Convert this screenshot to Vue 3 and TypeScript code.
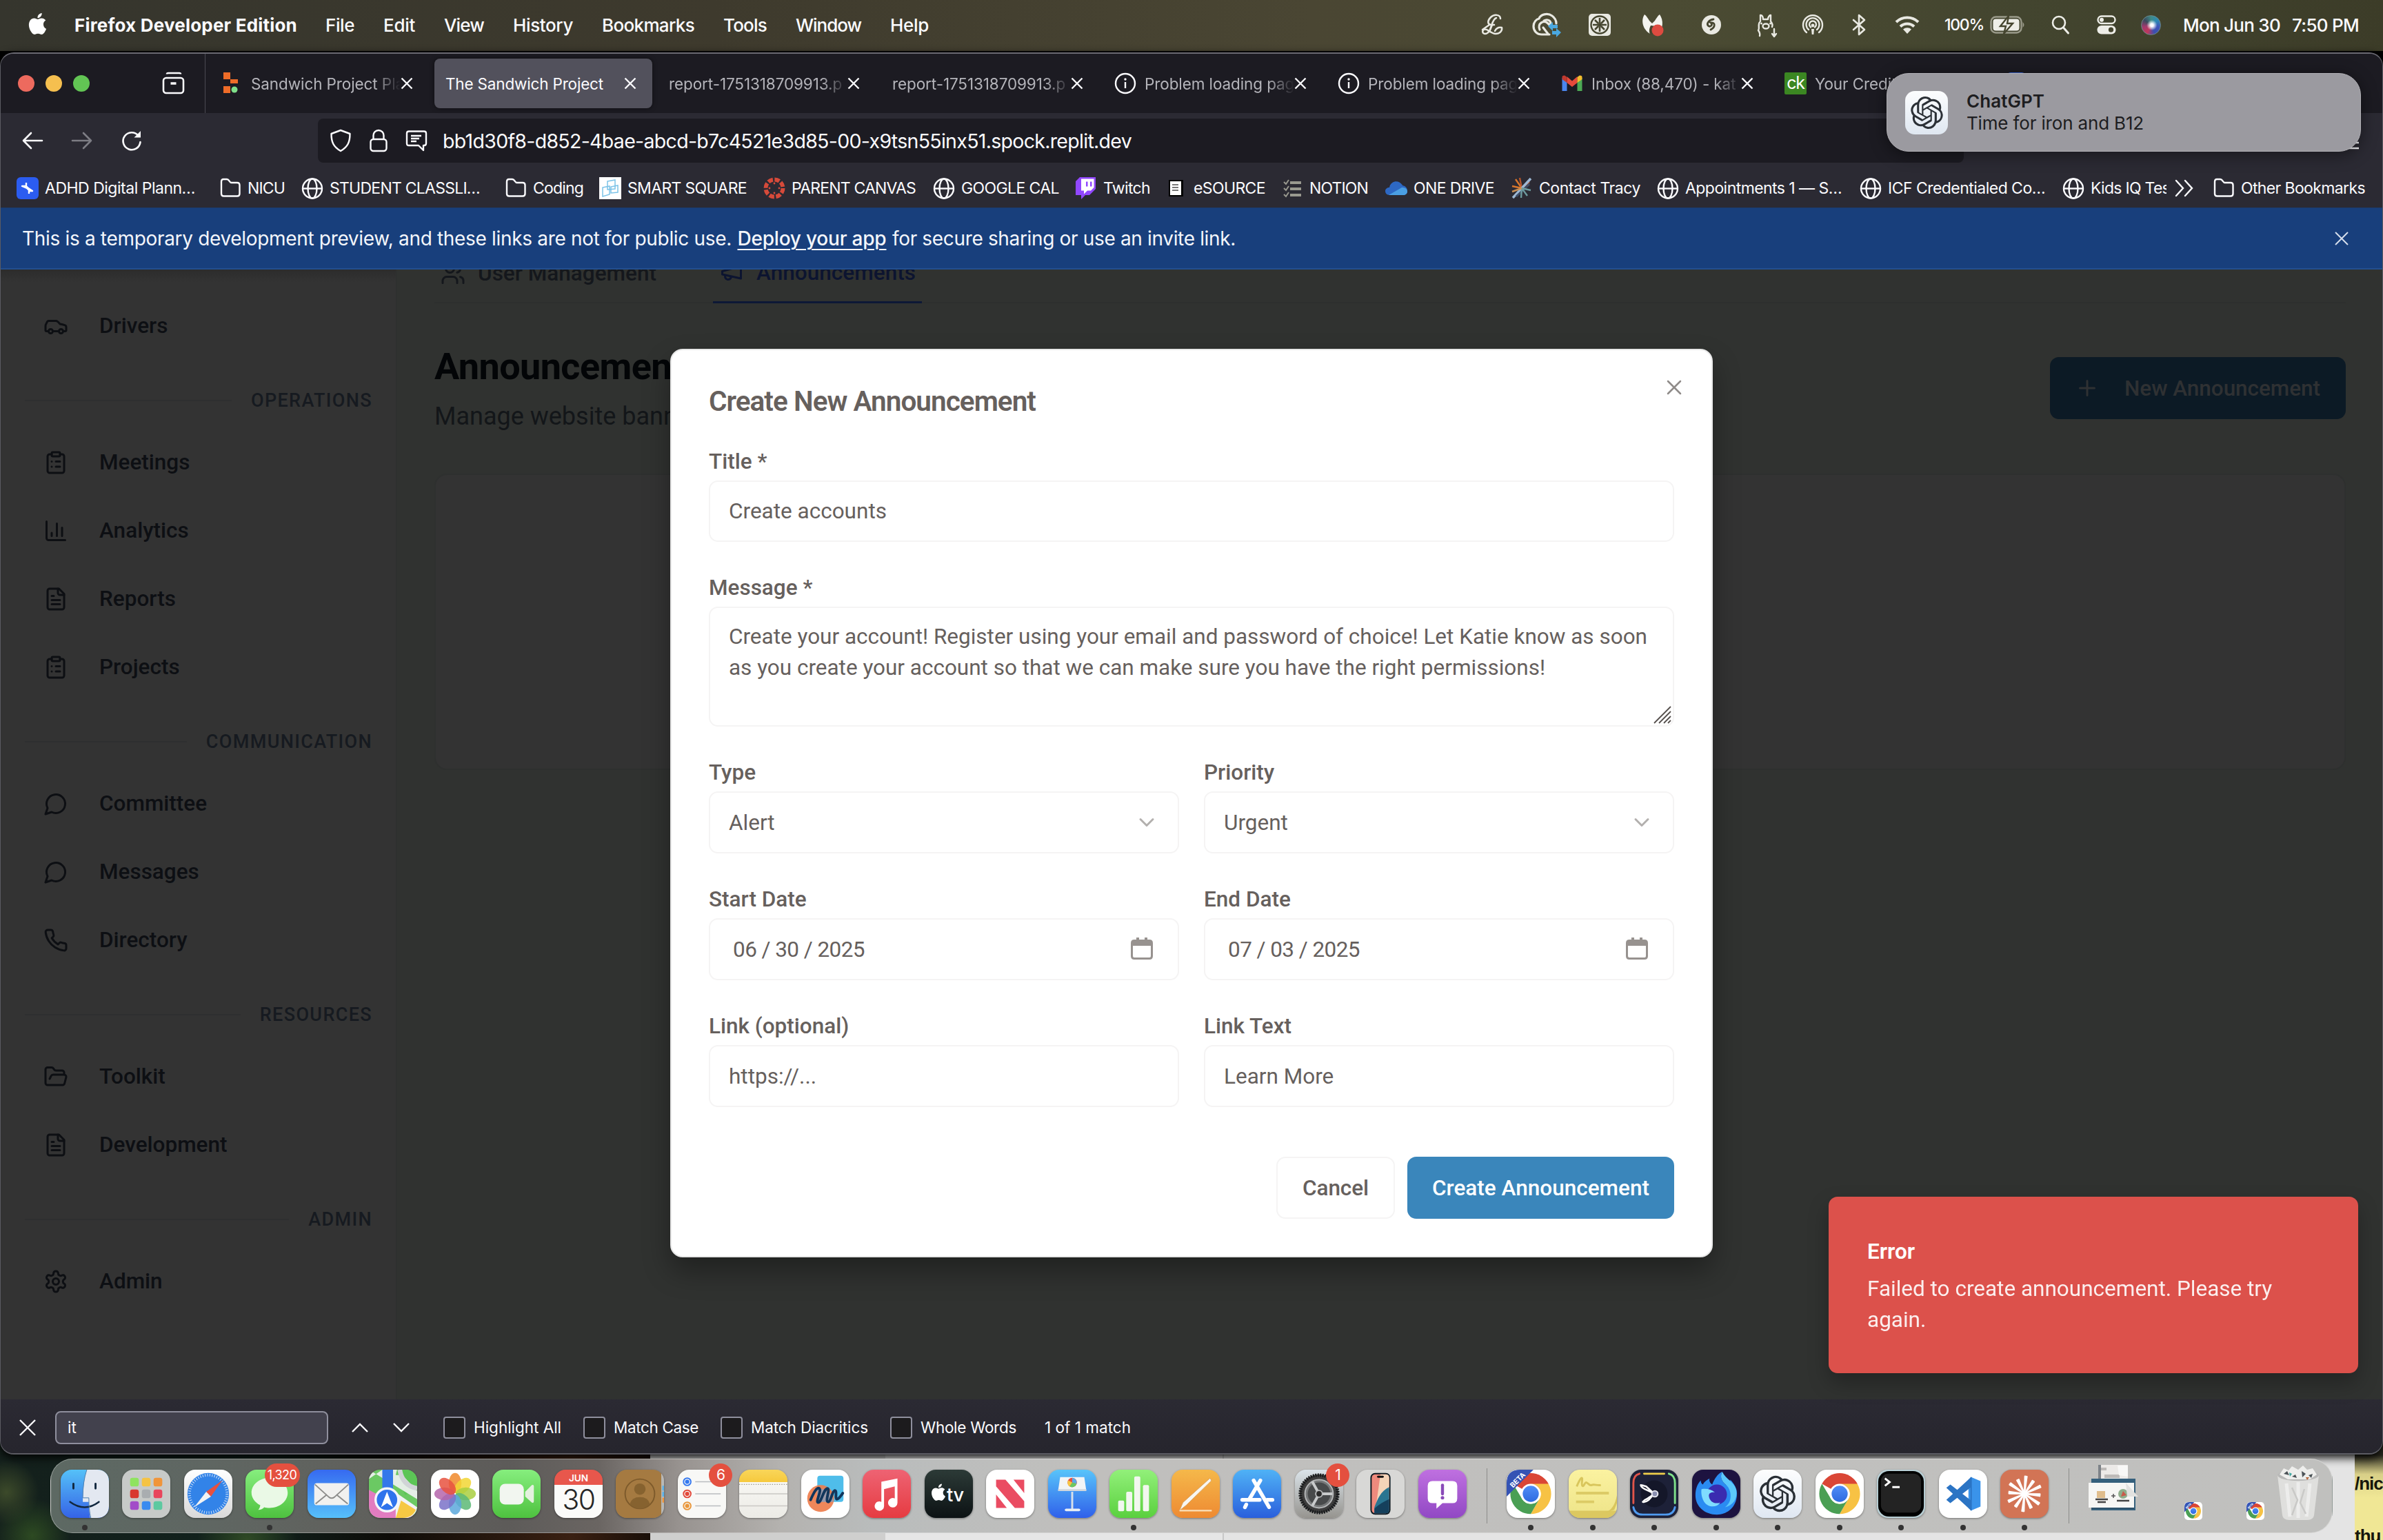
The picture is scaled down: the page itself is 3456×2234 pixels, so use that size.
<script setup lang="ts">
import type { Directive } from 'vue'

/** Spreads a label's letters so that it fills the width (in px) it is given. */
const vFit: Directive<HTMLElement, number> = {
  mounted(el, { value }) {
    const natural = el.getBoundingClientRect().width
    const count = (el.textContent ?? '').trim().length
    if (count > 0) el.style.letterSpacing = `${((value - natural) / count).toFixed(3)}px`
  },
}

interface Fitted { text: string; w: number }

const menus: Fitted[] = [
  { text: 'File', w: 42 }, { text: 'Edit', w: 46 }, { text: 'View', w: 58 },
  { text: 'History', w: 87 }, { text: 'Bookmarks', w: 134 }, { text: 'Tools', w: 63 },
  { text: 'Window', w: 95 }, { text: 'Help', w: 56 },
]

const applePath = 'M12.152 6.896c-.948 0-2.415-1.078-3.96-1.04-2.04.027-3.91 1.183-4.961 3.014-2.117 3.675-.546 9.103 1.519 12.09 1.013 1.454 2.208 3.09 3.792 3.039 1.52-.065 2.09-.987 3.935-.987 1.831 0 2.35.987 3.96.948 1.637-.026 2.676-1.48 3.676-2.948 1.156-1.688 1.636-3.325 1.662-3.415-.039-.013-3.182-1.221-3.22-4.857-.026-3.04 2.48-4.494 2.597-4.559-1.429-2.09-3.623-2.324-4.39-2.376-2-.156-3.675 1.09-4.61 1.09zM15.53 3.83c.843-1.012 1.4-2.427 1.245-3.83-1.207.052-2.662.805-3.532 1.818-.78.896-1.454 2.338-1.273 3.714 1.338.104 2.715-.688 3.559-1.701'
const knotPath = 'M22.2819 9.8211a5.9847 5.9847 0 0 0-.5157-4.9108 6.0462 6.0462 0 0 0-6.5098-2.9A6.0651 6.0651 0 0 0 4.9807 4.1818a5.9847 5.9847 0 0 0-3.9977 2.9 6.0462 6.0462 0 0 0 .7427 7.0966 5.98 5.98 0 0 0 .511 4.9107 6.051 6.051 0 0 0 6.5146 2.9001A5.9847 5.9847 0 0 0 13.2599 24a6.0557 6.0557 0 0 0 5.7718-4.2058 5.9894 5.9894 0 0 0 3.9977-2.9001 6.0557 6.0557 0 0 0-.7475-7.0729zm-9.022 12.6081a4.4755 4.4755 0 0 1-2.8764-1.0408l.1419-.0804 4.7783-2.7582a.7948.7948 0 0 0 .3927-.6813v-6.7369l2.02 1.1686a.071.071 0 0 1 .038.052v5.5826a4.504 4.504 0 0 1-4.4945 4.4944zm-9.6607-4.1254a4.4708 4.4708 0 0 1-.5346-3.0137l.142.0852 4.783 2.7582a.7712.7712 0 0 0 .7806 0l5.8428-3.3685v2.3324a.0804.0804 0 0 1-.0332.0615L9.74 19.9502a4.4992 4.4992 0 0 1-6.1408-1.6464zM2.3408 7.8956a4.485 4.485 0 0 1 2.3655-1.9728V11.6a.7664.7664 0 0 0 .3879.6765l5.8144 3.3543-2.0201 1.1685a.0757.0757 0 0 1-.071 0l-4.8303-2.7865A4.504 4.504 0 0 1 2.3408 7.872zm16.5963 3.8558L13.1038 8.364 15.1192 7.2a.0757.0757 0 0 1 .071 0l4.8303 2.7913a4.4944 4.4944 0 0 1-.6765 8.1042v-5.6772a.79.79 0 0 0-.407-.667zm2.0107-3.0231l-.142-.0852-4.7735-2.7818a.7759.7759 0 0 0-.7854 0L9.409 9.2297V6.8974a.0662.0662 0 0 1 .0284-.0615l4.8303-2.7866a4.4992 4.4992 0 0 1 6.6802 4.66zM8.3065 12.863l-2.02-1.1638a.0804.0804 0 0 1-.038-.0567V6.0742a4.4992 4.4992 0 0 1 7.3757-3.4537l-.142.0805L8.704 5.459a.7948.7948 0 0 0-.3927.6813zm1.0976-2.3654l2.602-1.4998 2.6069 1.4998v2.9994l-2.5974 1.4997-2.6067-1.4997Z'

/** Status icons; `gap` is the free space to the left of each one. */
interface StatusIcon { gap: number; art: string }
const statusIcons: StatusIcon[] = [
  { gap: 0, art: '<g fill="none" stroke="#e9e9e2" stroke-width="2.500" stroke-linecap="round" stroke-linejoin="round"><path d="M30 9C30 3 21 2 16 7c-5 5-5 10 0 11h5"/><path d="M24 8c-5 2-6 9-8 14-1 4-4 9-8 9s-5-4-2-6c5-3 9 6 17 6 6 0 10-4 9-9-5-1-8 1-10 5"/><path d="M14 18L4 25M18 18l-4 10"/></g>' },
  { gap: 41, art: '<g fill="none" stroke="#e9e9e2" stroke-width="3.200" stroke-linecap="round"><path d="M13 32C6 32 1 27 1 20 1 14 5 10 9 9c2-6 12-9 19-4 4 3 6 7 6 11M24 32H13"/><path d="M10 25c-4-9 6-15 12-9l3 3M16 12c5-3 10 0 10 4M15 22l7 9"/></g><path d="M22 20l7-6v4h7v5h-7v4z" fill="#4aa8e0"/><path d="M41 29l-7-6v4h-6v5h6v4z" fill="#4aa8e0"/>' },
  { gap: 43, art: '<rect x="2" y="2" width="32" height="32" rx="5" fill="#e9e9e2"/><circle cx="18" cy="18" r="12.500" fill="none" stroke="#45452f" stroke-width="2.400"/><g stroke="#45452f" stroke-width="2.600"><path d="M18 8v7M18 21v7M8 18h7M21 18h7M11 11l5 5M20 20l5 5M25 11l-5 5M16 20l-5 5"/></g><circle cx="18" cy="18" r="3" fill="#45452f"/>' },
  { gap: 40, art: '<path d="M7 3c3 2 5 6 7 9l4 4 4-4c2-3 4-7 7-9 6 9 5 20-2 28H15C5 25 1 12 7 3z" fill="#f4f4ef"/><path d="M16 19c-2 4-3 8-1 13h6l3-12z" fill="#45452f"/><circle cx="26" cy="26" r="8.500" fill="#dd4b40"/>' },
  { gap: 50, art: '<circle cx="18" cy="18" r="14" fill="#e9e9e2"/><path d="M21 10c-7 1-10 6-8 9 3 3 8-1 4-4 7-1 7 6 0 10" fill="none" stroke="#45452f" stroke-width="2.800" stroke-linecap="round"/>' },
  { gap: 44, art: '<g fill="none" stroke="#e9e9e2" stroke-width="2.400" stroke-linecap="round" stroke-linejoin="round"><path d="M8 34c1-3 0-5-2-8 2-3 0-6 1-9 0-2 2-4 2-4V4c3 0 4 3 4 6h7c0-3 2-6 4-6v9c2 2 3 5 2 8"/><ellipse cx="17" cy="20" rx="4.500" ry="3.500"/><path d="M29 24v10M26 31l3 4 3-4"/></g><circle cx="10.500" cy="16" r="1.500" fill="#e9e9e2"/><circle cx="23.500" cy="16" r="1.500" fill="#e9e9e2"/>' },
  { gap: 31, art: '<g fill="none" stroke="#e9e9e2" stroke-width="2.400" stroke-linecap="round"><path d="M9 29a14 14 0 1 1 18 0"/><path d="M12 25a9.500 9.500 0 1 1 12 0"/><path d="M15 21.500a5 5 0 1 1 6 0"/></g><circle cx="18" cy="19" r="2.400" fill="#e9e9e2"/><path d="M16 24h4l-.7 8h-2.600z" fill="#e9e9e2"/>' },
  { gap: 31, art: '<path d="M10 11l16 14-8 7V4l8 7-16 14" fill="none" stroke="#e9e9e2" stroke-width="2.600" stroke-linejoin="round" stroke-linecap="round"/>' },
  { gap: 34, art: '<g fill="none" stroke="#e9e9e2" stroke-width="4"><path d="M2 14a23 23 0 0 1 32 0"/><path d="M8 20.500a14.500 14.500 0 0 1 20 0"/></g><path d="M18 31l-6-6.500a9 9 0 0 1 12 0z" fill="#e9e9e2"/>' },
]

const tabs = [
  { title: 'Sandwich Project Pla', icon: 'replit', fit: 0, active: false },
  { title: 'The Sandwich Project', icon: '', fit: 227, active: true },
  { title: 'report-1751318709913.p', icon: '', fit: 0, active: false },
  { title: 'report-1751318709913.p', icon: '', fit: 0, active: false },
  { title: 'Problem loading pag', icon: 'info', fit: 0, active: false },
  { title: 'Problem loading pag', icon: 'info', fit: 0, active: false },
  { title: 'Inbox (88,470) - kat', icon: 'gmail', fit: 0, active: false },
  { title: 'Your Credit', icon: 'ck', fit: 0, active: false },
]
const tabIcons: Record<string, string> = {
  replit: '<path d="M4 0h10v10H4zM14 10h11v6H14zM4 20h10v10H4z" fill="#ee6c28" /><circle cx="20" cy="25" r="4.500" fill="#7fe08a"/>',
  info: '<circle cx="16" cy="16" r="14" fill="none" stroke="#fbfbfe" stroke-width="2.400"/><path d="M16 14v9" stroke="#fbfbfe" stroke-width="2.400"/><circle cx="16" cy="10" r="1.700" fill="#fbfbfe"/>',
  gmail: '<path d="M1.500 27V8l7 5v14z" fill="#4a86ee"/><path d="M23.500 27h7V8l-7 5z" fill="#4caa54"/><path d="M8.500 6v9l7.500 6 7.500-6V6L16 12.500z" fill="#e64a3b"/><path d="M1.500 10V7c0-2.500 3-3 4.500-2l2.500 2v8z" fill="#c0392f"/><path d="M30.500 10V7c0-2.500-3-3-4.500-2l-2.500 2v8z" fill="#f4bd2e"/>',
}

interface Bookmark extends Fitted { icon: string; slot: number; clip?: boolean }
const bookmarks: Bookmark[] = [
  { text: 'ADHD Digital Plann…', w: 218, icon: 'adhd', slot: 294 },
  { text: 'NICU', w: 54, icon: 'folder', slot: 119 },
  { text: 'STUDENT CLASSLI…', w: 218, icon: 'globe', slot: 295 },
  { text: 'Coding', w: 73, icon: 'folder', slot: 137 },
  { text: 'SMART SQUARE', w: 173, icon: 'smart', slot: 238 },
  { text: 'PARENT CANVAS', w: 180, icon: 'canvas', slot: 246 },
  { text: 'GOOGLE CAL', w: 142, icon: 'globe', slot: 206 },
  { text: 'Twitch', w: 68, icon: 'twitch', slot: 131 },
  { text: 'eSOURCE', w: 104, icon: 'sheet', slot: 168 },
  { text: 'NOTION', w: 85, icon: 'list', slot: 151 },
  { text: 'ONE DRIVE', w: 117, icon: 'cloud', slot: 182 },
  { text: 'Contact Tracy', w: 147, icon: 'burst', slot: 212 },
  { text: 'Appointments 1 — S…', w: 227, icon: 'globe', slot: 294 },
  { text: 'ICF Credentialed Co…', w: 228, icon: 'globe', slot: 294 },
  { text: 'Kids IQ Tes', w: 115, icon: 'globe', slot: 151, clip: true },
]
const bookmarkIcons: Record<string, string> = {
  adhd: '<rect width="32" height="32" rx="6" fill="#2b5cf0"/><path d="M14 8v5l3 3 6 4h-5M18 24v-5l-3-3-7-3h5" fill="none" stroke="#fff" stroke-width="2.400" stroke-linejoin="round"/>',
  folder: '<path d="M3 6.500C3 4.500 4 3 6 3h5c2 0 2.500 1 3.500 2.500S16 8 18 8h8c2 0 3.500 1 3.500 3.500V24c0 2-1.500 3.500-3.500 3.500H6.500C4 27.500 3 26 3 24z" fill="none" stroke="#fbfbfe" stroke-width="2.400"/>',
  globe: '<g fill="none" stroke="#fbfbfe" stroke-width="2.400"><circle cx="16" cy="16.500" r="14"/><ellipse cx="16" cy="16.500" rx="6.500" ry="14"/><path d="M2 16.500h28"/></g>',
  smart: '<rect width="32" height="32" fill="#fff"/><g fill="none" stroke="#7cc3e8" stroke-width="1.500"><path d="M12 6l11-2v13l-11 1zM5 15l10-2v12l-10 3zM17 14l10-2v10l-10 1z"/></g>',
  canvas: '<circle cx="16" cy="16" r="12.500" fill="none" stroke="#d64a3a" stroke-width="6" stroke-dasharray="7.300 2.520"/><g fill="#d64a3a"><circle cx="16" cy="9" r="1.400"/><circle cx="16" cy="23" r="1.400"/><circle cx="9" cy="16" r="1.400"/><circle cx="23" cy="16" r="1.400"/></g>',
  twitch: '<path d="M7 0L1 6v20h8v6l6-6h6l9-9V0z" fill="#9147ff"/><path d="M9 2.500h18.500V15l-4.500 4.500h-5l-5 5v-5H9z" fill="#fff"/><path d="M16 6.500h2.500v7H16zM22 6.500h2.500v7H22z" fill="#9147ff"/>',
  sheet: '<rect x="5" y="4" width="21" height="24" fill="#000"/><rect x="7" y="6" width="16" height="20" fill="#fff"/><path d="M10 11h9M10 15h9M10 19h9" stroke="#777" stroke-width="2"/>',
  list: '<g stroke="#99998f" stroke-width="4.200" fill="none"><path d="M13 8h16M13 17h16M13 26h16"/><path d="M4 7l3 3 4-6M4 16l3 3 4-6M4 25l3 3 4-6" stroke-width="2"/></g>',
  cloud: '<path d="M6 15a10 10 0 0 1 19-3c5 1 7 4 7 8 0 4-3 6-6 6H7C2 26 0 23 0 20c0-3 3-5 6-5z" fill="#2d68c4"/><path d="M5 26l19-11c5 0 8 2 8 6 0 3-3 5-6 5z" fill="#4a9fe3"/>',
  burst: '<g stroke-width="2.400"><path d="M16 16L7 3M16 16L2 13" stroke="#d8762c"/><path d="M16 16L13 1M16 16l11-9" stroke="#b4532a"/><path d="M3 30L29 2" stroke="#9db8d4" stroke-width="3.500"/><path d="M8 28L27 10" stroke="#3f4d66" stroke-width="3"/><path d="M16 16l13 3M16 16l8 11M16 16l-1 14" stroke="#6d9a9e"/><path d="M16 16L2 21" stroke="#c78f55"/></g>',
}

interface NavRow { label: string; icon?: string }
const navRows: NavRow[] = [
  { label: 'Drivers', icon: 'car' },
  { label: 'OPERATIONS' },
  { label: 'Meetings', icon: 'clipboard' },
  { label: 'Analytics', icon: 'chart' },
  { label: 'Reports', icon: 'file' },
  { label: 'Projects', icon: 'clipboard' },
  { label: 'COMMUNICATION' },
  { label: 'Committee', icon: 'message' },
  { label: 'Messages', icon: 'message' },
  { label: 'Directory', icon: 'phone' },
  { label: 'RESOURCES' },
  { label: 'Toolkit', icon: 'folder' },
  { label: 'Development', icon: 'file' },
  { label: 'ADMIN' },
  { label: 'Admin', icon: 'gear' },
]
const lineIcons: Record<string, string> = {
  car: '<path d="M19 17h2c.6 0 1-.4 1-1v-3c0-.9-.7-1.700-1.500-1.900C18.700 10.600 16 10 16 10s-1.300-1.400-2.200-2.300c-.5-.4-1.100-.7-1.800-.7H5c-.6 0-1.100.4-1.400.9l-1.400 2.900A3.700 3.700 0 0 0 2 12v4c0 .6.4 1 1 1h2"/><circle cx="7" cy="17" r="2"/><path d="M9 17h6"/><circle cx="17" cy="17" r="2"/>',
  clipboard: '<rect width="8" height="4" x="8" y="2" rx="1"/><path d="M16 4h2a2 2 0 0 1 2 2v14a2 2 0 0 1-2 2H6a2 2 0 0 1-2-2V6a2 2 0 0 1 2-2h2M12 11h4M12 16h4M8 11h.01M8 16h.01"/>',
  chart: '<path d="M3 3v16a2 2 0 0 0 2 2h16M18 17V9M13 17V5M8 17v-3"/>',
  file: '<path d="M15 2H6a2 2 0 0 0-2 2v16a2 2 0 0 0 2 2h12a2 2 0 0 0 2-2V7Z"/><path d="M14 2v4a2 2 0 0 0 2 2h4M10 9H8M16 13H8M16 17H8"/>',
  message: '<path d="M7.900 20A9 9 0 1 0 4 16.100L2 22Z"/>',
  phone: '<path d="M22 16.920v3a2 2 0 0 1-2.180 2 19.790 19.790 0 0 1-8.630-3.070 19.500 19.500 0 0 1-6-6 19.790 19.790 0 0 1-3.070-8.670A2 2 0 0 1 4.110 2h3a2 2 0 0 1 2 1.720 12.840 12.840 0 0 0 .7 2.810 2 2 0 0 1-.45 2.110L8.090 9.910a16 16 0 0 0 6 6l1.270-1.270a2 2 0 0 1 2.110-.45 12.840 12.840 0 0 0 2.810.7A2 2 0 0 1 22 16.920z"/>',
  folder: '<path d="m6 14 1.500-2.900A2 2 0 0 1 9.240 10H20a2 2 0 0 1 1.940 2.500l-1.540 6a2 2 0 0 1-1.950 1.500H4a2 2 0 0 1-2-2V5a2 2 0 0 1 2-2h3.900a2 2 0 0 1 1.690.9l.81 1.200a2 2 0 0 0 1.670.9H18a2 2 0 0 1 2 2v2"/>',
  gear: '<path d="M12.220 2h-.44a2 2 0 0 0-2 2v.18a2 2 0 0 1-1 1.730l-.43.25a2 2 0 0 1-2 0l-.15-.08a2 2 0 0 0-2.730.73l-.22.38a2 2 0 0 0 .73 2.730l.15.1a2 2 0 0 1 1 1.720v.51a2 2 0 0 1-1 1.740l-.15.09a2 2 0 0 0-.73 2.730l.22.38a2 2 0 0 0 2.730.73l.15-.08a2 2 0 0 1 2 0l.43.25a2 2 0 0 1 1 1.730V20a2 2 0 0 0 2 2h.44a2 2 0 0 0 2-2v-.18a2 2 0 0 1 1-1.730l.43-.25a2 2 0 0 1 2 0l.15.08a2 2 0 0 0 2.730-.73l.22-.39a2 2 0 0 0-.73-2.730l-.15-.08a2 2 0 0 1-1-1.740v-.5a2 2 0 0 1 1-1.740l.15-.09a2 2 0 0 0 .73-2.730l-.22-.38a2 2 0 0 0-2.730-.73l-.15.08a2 2 0 0 1-2 0l-.43-.25a2 2 0 0 1-1-1.730V4a2 2 0 0 0-2-2z"/><circle cx="12" cy="12" r="3"/>',
  users: '<path d="M16 21v-2a4 4 0 0 0-4-4H6a4 4 0 0 0-4 4v2"/><circle cx="9" cy="7" r="4"/><path d="M22 21v-2a4 4 0 0 0-3-3.870M16 3.130a4 4 0 0 1 0 7.750"/>',
  megaphone: '<path d="m3 11 18-5v12L3 14v-3z"/><path d="M11.600 16.800a3 3 0 1 1-5.800-1.600"/>',
  plus: '<path d="M5 12h14M12 5v14"/>',
  x: '<path d="M18 6 6 18M6 6l12 12"/>',
  chevron: '<path d="m6 9 6 6 6-6"/>',
}

const findOptions = [
  { text: 'Highlight All', w: 127, gap: 32 },
  { text: 'Match Case', w: 123, gap: 32 },
  { text: 'Match Diacritics', w: 170, gap: 32 },
  { text: 'Whole Words', w: 139, gap: 41 },
]

interface DockApp { name: string; bg?: string; art: string; dot?: boolean; badge?: string; sep?: boolean }

const chromeDisc = (id: string) => `
  <circle cx="36" cy="36" r="30" fill="#fff"/>
  <path d="M36 36L9.600 21A30 30 0 0 1 62.400 21z" fill="#da4636"/>
  <path d="M36 6a30 30 0 0 1 26.400 15H36z" fill="#da4636"/>
  <path d="M62.400 21A30 30 0 0 1 36 66l13-22.500A15 15 0 0 0 36 21z" fill="#f7c244"/>
  <path d="M36 66A30 30 0 0 1 9.600 21L23 43.500A15 15 0 0 0 49 43.500z" fill="#4a9f54"/>
  <circle cx="36" cy="36" r="15" fill="#fff"/><circle cx="36" cy="36" r="12" fill="url(#${id})"/>
  <defs><linearGradient id="${id}" x2="0" y2="1"><stop stop-color="#4f8df7"/><stop offset="1" stop-color="#2f6be0"/></linearGradient></defs>`
const betaRibbon = '<path d="M0 40V20Q0 0 20 0h20z" fill="#3553b4"/><text x="0" y="0" transform="translate(9.500 27.500) rotate(-45)" font-family="Inter, sans-serif" font-size="10.500" font-weight="700" fill="#fff">BETA</text>'

const petals = ['#f08a2c', '#f2d634', '#a9cf3f', '#5cb876', '#5ca8dc', '#7a72c8', '#b565ab', '#e8523f']
  .map((c, i) => `<ellipse cx="36" cy="20" rx="9.500" ry="15" fill="${c}" fill-opacity=".85" transform="rotate(${i * 45} 36 36)"/>`).join('')
const padColors = ['#8fe35f', '#f5c344', '#f0953a', '#d8392f', '#a9adb0', '#e8455c', '#a24cc8', '#3a8bf0', '#5cc9a0']
const padTiles = padColors
  .map((c, i) => `<rect x="${12 + (i % 3) * 17.5}" y="${12 + Math.floor(i / 3) * 17.5}" width="13" height="13" rx="3.500" fill="${c}"/>`).join('')
const rays = Array.from({ length: 12 }, (_, i) =>
  `<path d="M36 36L34 ${i % 2 ? 13 : 10}h3z" stroke="#fff" stroke-width="2.200" stroke-linejoin="round" fill="#fff" transform="rotate(${i * 30 + 6} 36 36)"/>`).join('')

const dockApps: DockApp[] = [
  { name: 'Finder', bg: 'linear-gradient(#55c1f8, #3563e6)', dot: true, art: '<path d="M39 0h15q18 0 18 18v36q0 18-18 18H44c-1-8-2-14-2-24h-9C33 30 35 12 39 0z" fill="#e3e8f1"/><path d="M19 21v7M52 21v7" stroke="#12283f" stroke-width="3" stroke-linecap="round"/><path d="M14 48q22 16 43 0" fill="none" stroke="#12283f" stroke-width="2.600" stroke-linecap="round"/><path d="M39 0c-4 12-6 26-6 42h9c0 12 1 22 3 30" fill="none" stroke="#4d7fae" stroke-width="1"/>' },
  { name: 'Launchpad', bg: '#c7cac8', art: padTiles },
  { name: 'Safari', bg: 'linear-gradient(#fff, #d9d9d9)', art: '<circle cx="36" cy="36" r="31" fill="#3283e8"/><circle cx="36" cy="36" r="28" fill="none" stroke="#d6e6fa" stroke-width="4" stroke-dasharray="1 2.520"/><path d="M57 16L40 40l-7-7z" fill="#e8503f"/><path d="M15 56l18-23 7 7z" fill="#f3f3f3"/>' },
  { name: 'Messages', bg: 'linear-gradient(#86ee7e, #4ec23f)', dot: true, badge: '1,320', art: '<path d="M36 12c15 0 27 10 27 22.500S51 57 36 57c-3 0-6-.4-8-1-2 2-5 4-9 4 2-2 3-5 3-7-8-4-13-11-13-18.500C9 22 21 12 36 12z" fill="#eaf9e6"/>' },
  { name: 'Mail', bg: 'linear-gradient(#366af0, #56c0fa)', art: '<rect x="10" y="20" width="52" height="33" rx="4" fill="#f1f1ef"/><path d="M11 22l21 19q4 3 8 0l21-19M12 51l17-14M60 51L43 37" fill="none" stroke="#8d8d8b" stroke-width="2"/>' },
  { name: 'Maps', bg: '#6bc963', art: '<path d="M42 0h12q18 0 18 18v8L54 38 46 20z" fill="#5cc556"/><path d="M0 30l26 14 46 28H18Q0 72 0 54z" fill="#e27cc0"/><path d="M40 34l32 22q-1 12-14 16H40z" fill="#f2f2f4"/><path d="M48 46l22 14q-5 12-20 12H40z" fill="#f6c843"/><path d="M0 14L20 0h22l-2 8h10l22 24v12L0 0z" fill="#f2f2f4" opacity=".9"/><path d="M46 0q4 24 26 28" fill="none" stroke="#d0d4d6" stroke-width="7"/><path d="M20 0h16v36H20z" fill="#3478ea"/><circle cx="27" cy="45" r="17" fill="#2f73ec" stroke="#f4f6fa" stroke-width="3.500"/><path d="M27 33l9 23-9-6-9 6z" fill="#fff"/>' },
  { name: 'Photos', bg: '#fff', art: petals },
  { name: 'FaceTime', bg: 'linear-gradient(#86ee7e, #4ec23f)', art: '<rect x="11" y="21" width="36" height="31" rx="8" fill="#f2f6f0"/><path d="M49 33l10-10q3-1 3 2v22q0 3-3 2L49 40z" fill="#e4f1df"/>' },
  { name: 'Calendar', bg: 'linear-gradient(#e8574c 31%, #fbfbf9 31%)', art: '<text x="36" y="17" text-anchor="middle" font-family="Inter, sans-serif" font-size="14" font-weight="600" fill="#fff">JUN</text><text x="36" y="60" text-anchor="middle" font-family="Inter, sans-serif" font-size="42" font-weight="300" letter-spacing="-1.500" fill="#262626">30</text>' },
  { name: 'Contacts', bg: 'linear-gradient(90deg, #a57a41 95%, #b8b8b6 95%)', art: '<g fill="none" stroke="#7d5a2b" stroke-width="2"><circle cx="36" cy="36" r="22"/></g><circle cx="36" cy="29" r="8.500" fill="#86622f"/><path d="M21 51q3-10 15-10t15 10q-6 7-15 7t-15-7z" fill="#86622f"/><path d="M71 24v7M71 33v7" stroke="#58b2ea" stroke-width="3"/><path d="M71 42v7" stroke="#f0953a" stroke-width="3"/>' },
  { name: 'Reminders', bg: '#f8f8f6', badge: '6', art: '<g stroke-width="2" fill="none"><circle cx="14" cy="18" r="5.500" stroke="#3478f0"/><circle cx="14" cy="36" r="5.500" stroke="#e2483a"/><circle cx="14" cy="54" r="5.500" stroke="#e9963a"/></g><circle cx="14" cy="18" r="3.200" fill="#3478f0"/><circle cx="14" cy="36" r="3.200" fill="#e2483a"/><circle cx="14" cy="54" r="3.200" fill="#e9963a"/><path d="M26 18h38M26 36h38M26 54h38" stroke="#b9bcc0" stroke-width="1.600"/>' },
  { name: 'Notes', bg: 'linear-gradient(#f9d65a, #f6c93e 25%, #f7f6f2 26%, #ecebe6)', art: '<path d="M0 36h72M0 54h72" stroke="#c9c8c4" stroke-width="1.400"/><path d="M0 22h72" stroke="#9c9a90" stroke-width="1.500" stroke-dasharray="1.500 2"/>' },
  { name: 'Freeform', bg: '#fff', art: '<rect x="24" y="9" width="39" height="39" rx="4" fill="#4fbdea"/><circle cx="29" cy="43" r="20" fill="#ee7d4c" opacity=".92"/><path d="M24 29a20 20 0 0 1 24 19H28q-4 0-4-4z" fill="#7aa3cc" opacity=".7"/><path d="M14 45c6-14 10-19 13-17 4 3-6 20-2 21 5 1 8-20 14-21 5 0-4 19 1 20 4 1 6-16 10-17 4 0 0 12 3 13 3 0 6-5 9-9" fill="none" stroke="#12365c" stroke-width="4" stroke-linecap="round"/>' },
  { name: 'Music', bg: 'linear-gradient(#ee6373, #e63b41)', art: '<path d="M28 18l24-5v36a7 7 0 1 1-4-6V25l-16 4v25a7 7 0 1 1-4-6z" fill="#fff"/>' },
  { name: 'TV', bg: 'linear-gradient(#2c3a37, #0c1214)', art: `<path d="${applePath}" fill="#fff" transform="translate(8 21) scale(1.050)"/><text x="33" y="47" font-family="Inter, sans-serif" font-size="28" font-weight="500" letter-spacing="-.5" fill="#fff">tv</text>` },
  { name: 'News', bg: '#fff', art: '<path d="M15 15h14l28 32v10H43L15 25zM41 15h16v20zM15 37v20h16z" fill="#ea4c62"/>' },
  { name: 'Keynote', bg: 'linear-gradient(#58c4fa, #2f60ea)', art: '<path d="M18 11h36l3 20H15z" fill="#f2f4f6"/><path d="M15 29h42v3H15z" fill="#d0d6dc"/><circle cx="36" cy="19" r="7" fill="#e8503f"/><path d="M36 19V12a7 7 0 0 1 6.500 9z" fill="#5ca8e8"/><path d="M36 19l6.500 2A7 7 0 0 1 32 25z" fill="#6bc963"/><path d="M36 19l-4 6a7 7 0 0 1-2-9z" fill="#f6c843"/><path d="M36 33v27" stroke="#d8e0ea" stroke-width="3"/><rect x="25" y="58" width="23" height="4" rx="2" fill="#e8eef4"/>' },
  { name: 'Numbers', bg: 'linear-gradient(#92f07a, #5ad03e)', dot: true, art: '<g fill="#f2f7ef"><rect x="13" y="46" width="9" height="16" rx="2"/><rect x="25" y="33" width="9" height="29" rx="2"/><rect x="37" y="10" width="9" height="52" rx="2"/><rect x="50" y="23" width="9" height="39" rx="2"/></g>' },
  { name: 'Pages', bg: 'linear-gradient(#f5b84a, #ee8a32)', art: '<path d="M57 13q3 1 2 4L22 53l-10 8 5-12z" fill="#f8f6f2" stroke="#d9a35c" stroke-width="1"/><path d="M12 61h48" stroke="#fbe0bb" stroke-width="2.400"/>' },
  { name: 'App Store', bg: 'linear-gradient(#4fb2f6, #2a5fdc)', art: '<g stroke="#fff" stroke-width="5.600" stroke-linecap="round"><path d="M41 16L24 45M31 16l23 40M14 45h26M51 45h8M20 52l-2 4"/></g>' },
  { name: 'System Settings', bg: 'linear-gradient(#dbe4ea, #96948f)', badge: '1', art: '<circle cx="36" cy="36" r="29" fill="#3d3d3d"/><circle cx="36" cy="36" r="28" fill="none" stroke="#17191b" stroke-width="5" stroke-dasharray="2 1.500"/><circle cx="36" cy="36" r="21" fill="#77797a" stroke="#b4b6b7" stroke-width="2"/><circle cx="36" cy="36" r="17" fill="#484a4b"/><path d="M36 36h20M36 36L26 18M36 36L26 54" stroke="#c8cacb" stroke-width="4"/><circle cx="36" cy="36" r="5" fill="#2b2b2b" stroke="#b8babb" stroke-width="2"/>' },
  { name: 'iPhone Mirroring', bg: '#d8d8d6', art: '<rect x="21" y="5" width="30" height="62" rx="7" fill="#0d1a22"/><rect x="23" y="7" width="26" height="58" rx="5" fill="#ef8a7d"/><path d="M36 7h8q5 0 5 5v16L30 50z" fill="#f5d4b8"/><path d="M49 26C36 32 32 44 27 56v9h17q5 0 5-5z" fill="#2a7591"/><path d="M49 44C40 48 34 52 27 58v7h17q5 0 5-5z" fill="#15405c"/><rect x="31" y="9" width="10" height="3" rx="1.500" fill="#111"/>' },
  { name: 'Feedback', bg: 'linear-gradient(#bf70e0, #9148c4)', art: '<path d="M21 17h30q7 0 7 7v19q0 7-7 7H36l-9 8v-8h-6q-7 0-7-7V24q0-7 7-7z" fill="#fff"/><path d="M36 23v13" stroke="#8a4bb8" stroke-width="4.500" stroke-linecap="round"/><circle cx="36" cy="42" r="2.600" fill="#8a4bb8"/>' },
  { name: 'sep1', sep: true, art: '' },
  { name: 'Chrome Beta', bg: '#fff', dot: true, art: chromeDisc('g1') + betaRibbon },
  { name: 'Stickies', bg: 'linear-gradient(#fbf2a0, #f0e68c 84%, #dcc860 86%)', dot: true, art: '<path d="M12 25c6-14 9-16 8-8s1 10 4 4 6 4 10 2 8 1 14 0" fill="none" stroke="#d9c65c" stroke-width="3"/><path d="M11 35h49M11 48h27" stroke="#dccb66" stroke-width="4"/><path d="M72 38q-4 22-18 26l14-4 4-10z" fill="#d9c65c"/>' },
  { name: 'Focus', bg: '#1d2138', dot: true, art: '<g fill="none" stroke-width="3" stroke-linecap="round"><path d="M21 6h30" stroke="#f0cf4a"/><path d="M5 50V20q0-12 9-14" stroke="#e0544a"/><path d="M58 6q9 2 9 14v30" stroke="#7ee08a"/><path d="M5 56q2 11 14 11h34q12 0 14-11" stroke="#4f9bf0"/></g><circle cx="36" cy="36" r="20" fill="#141729"/><path d="M35 35L24 25q-6-2-8-2 0 3 6 6zM35 37L26 43q-5 2-7 5 4 1 9-3z" fill="none" stroke="#fff" stroke-width="2.600" stroke-linejoin="round"/><circle cx="37" cy="36" r="4.500" fill="#8a8fb0" stroke="#e8e8f0" stroke-width="2"/>' },
  { name: 'Firefox Developer Edition', bg: '#1d1340', dot: true, art: '<path d="M45 3c-4 8-1 14 6 20 5-2 6-5 6-8 8 8 12 18 9 29-3 14-15 23-29 23C19 67 5 55 5 38c0-9 3-17 8-22 0 3 1 5 3 6 2-4 6-7 10-9-1 4 1 7 4 9 3-8 8-16 15-19z" fill="#2a8bf2"/><path d="M45 3c-4 8-1 14 6 20 9 9 9 26-2 33 12-3 19-12 17-26C63 18 50 14 45 3z" fill="#5cc8fb"/><circle cx="37" cy="37" r="15" fill="#3a2bb0"/><path d="M14 29c8-1 14 0 20 5-7-1-9 2-9 5 1 9 9 13 17 10-5 8-18 8-24-1-3-5-5-12-4-19z" fill="#7fdcff"/>' },
  { name: 'ChatGPT', bg: 'linear-gradient(#fdfefe, #dfe7f2)', dot: true, art: `<path d="${knotPath}" fill="#2a3036" transform="translate(9 9) scale(2.250)"/>` },
  { name: 'Chrome', bg: '#fff', dot: true, art: chromeDisc('g2') },
  { name: 'Terminal', bg: '#b9d0d6', dot: true, art: '<rect x="2" y="2" width="68" height="68" rx="16" fill="#000"/><rect x="6" y="6" width="60" height="58" rx="11" fill="#232323"/><path d="M12 13l7 5.500-7 5.500M23 26h11" fill="none" stroke="#fff" stroke-width="3"/>' },
  { name: 'VS Code', bg: '#fff', dot: true, art: '<path d="M48 11l14 6v38l-14 6-4-4V15z" fill="#3a93ea"/><path d="M48 11v15L17 50l-6-5zM11 27l6-5 31 24v15z" fill="#2b74c4"/><path d="M48 11v50" stroke="#2b74c4" stroke-width="2"/>' },
  { name: 'Claude', bg: '#d27455', dot: true, art: rays },
  { name: 'sep2', sep: true, art: '' },
]
</script>

<template>
  <div class="screen">
    <div class="wallpaper">
      <div class="forest"></div>
      <div class="sheet-gray"></div>
      <div class="sheet-white"></div>
      <div class="sticky-note"><span>/nicu</span><span>thu</span></div>
    </div>

    <header class="menubar">
      <svg class="apple" viewBox="0 0 24 24"><path :d="applePath" fill="#fff" /></svg>
      <strong v-fit="323">Firefox Developer Edition</strong>
      <span v-for="m in menus" :key="m.text" v-fit="m.w" class="menu">{{ m.text }}</span>
      <div class="status">
        <svg v-for="(s, i) in statusIcons" :key="i" class="status-icon" viewBox="0 0 36 36" :style="{ marginLeft: s.gap + 'px' }" v-html="s.art"></svg>
        <span class="percent"><i v-fit="57">100%</i></span>
        <svg class="battery" viewBox="0 0 52 26">
          <rect x="1.500" y="1.500" width="44" height="23" rx="7" fill="none" stroke="#9a9a8a" stroke-width="2.400" />
          <path d="M47.500 9q4 4 0 8z" fill="#9a9a8a" />
          <rect x="4.500" y="4.500" width="38" height="17" rx="4" fill="#eeeee8" />
          <path d="M27 0L15 15h8l-3 11 13-15h-8z" fill="#eeeee8" stroke="#45452f" stroke-width="2.400" />
        </svg>
        <svg class="spot" viewBox="0 0 28 28"><circle cx="12" cy="11" r="9" fill="none" stroke="#eeeee8" stroke-width="2.600" /><path d="M18.500 18l7 8" stroke="#eeeee8" stroke-width="3" stroke-linecap="round" /></svg>
        <svg class="control" viewBox="0 0 28 28">
          <rect x="1.500" y="1.500" width="25" height="10.500" rx="5.200" fill="none" stroke="#eeeee8" stroke-width="2.400" /><circle cx="7" cy="6.700" r="3" fill="#eeeee8" />
          <rect x=".5" y="15" width="27" height="12.500" rx="6.200" fill="#eeeee8" /><circle cx="20.500" cy="21.200" r="3.600" fill="#45452f" />
        </svg>
        <span class="siri"></span>
        <span class="clock"><i v-fit="141">Mon Jun 30</i><i v-fit="97">7:50 PM</i></span>
      </div>
    </header>

    <section class="window">
      <div class="tabbar">
        <div class="lights"><i class="red"></i><i class="amber"></i><i class="green"></i></div>
        <div class="viewbtn">
          <svg width="34" height="34" viewBox="0 0 34 34" fill="none" stroke="#fbfbfe" stroke-width="2.600"><path d="M7 3.500Q7 2 9 2h16q2 0 2 1.500" /><rect x="2" y="9" width="29" height="22" rx="4" /><path d="M12.500 17h8" stroke-width="3.500" /></svg>
        </div>
        <div v-for="(t, i) in tabs" :key="i" class="tab" :class="{ active: t.active }">
          <span v-if="t.icon === 'ck'" class="ck">ck</span>
          <svg v-else-if="t.icon" class="tab-icon" viewBox="0 0 32 32" v-html="tabIcons[t.icon]"></svg>
          <span class="tab-label"><i v-if="t.fit" v-fit="t.fit">{{ t.title }}</i><template v-else>{{ t.title }}</template></span>
          <svg class="tab-x" viewBox="0 0 18 18"><path d="M1.500 1.500l15 15M16.500 1.500l-15 15" stroke="#fbfbfe" stroke-width="2.400" /></svg>
        </div>
        <span class="blue-favicon"></span>
      </div>

      <div class="navbar">
        <svg class="nav-ic" viewBox="0 0 32 32"><path d="M30 16H3M14 5L3 16l11 11" fill="none" stroke="#fbfbfe" stroke-width="2.600" stroke-linejoin="round" stroke-linecap="round" /></svg>
        <svg class="nav-ic dim" viewBox="0 0 32 32"><path d="M2 16h27M18 5l11 11-11 11" fill="none" stroke="#fbfbfe" stroke-width="2.600" stroke-linejoin="round" stroke-linecap="round" /></svg>
        <svg class="nav-ic" viewBox="0 0 32 32"><path d="M25.500 8.500A12.500 12.500 0 1 0 28.500 18" fill="none" stroke="#fbfbfe" stroke-width="2.600" stroke-linecap="round" /><path d="M29 2v9.500h-9.500z" fill="#fbfbfe" /></svg>
        <div class="urlbar">
          <svg width="32" height="34" viewBox="0 0 32 34" fill="none" stroke="#fbfbfe" stroke-width="2.400" stroke-linejoin="round"><path d="M16 2l13.500 5c0 12-3 19-13.500 25C5.500 26 2.500 19 2.500 7z" /></svg>
          <svg width="28" height="34" viewBox="0 0 28 34" fill="none" stroke="#fbfbfe" stroke-width="2.400"><rect x="2.500" y="15" width="23" height="17" rx="4" /><path d="M6.500 15V9.500a7.500 7.500 0 0 1 15 0V15" /></svg>
          <svg width="32" height="34" viewBox="0 0 32 34" fill="none" stroke="#fbfbfe" stroke-width="2.400" stroke-linejoin="round"><path d="M5 3.500h22q3 0 3 3V21q0 3-3 3h-1v7l-7-7H5q-3 0-3-3V6.500q0-3 3-3z" /><path d="M8 10h15M8 14h12M8 18h8" /></svg>
          <span v-fit="999">bb1d30f8-d852-4bae-abcd-b7c4521e3d85-00-x9tsn55inx51.spock.replit.dev</span>
        </div>
        <svg class="burger" viewBox="0 0 32 32"><path d="M0 8h32M0 16h32M0 24h32" stroke="#fbfbfe" stroke-width="2.400" /></svg>
      </div>

      <div class="bookmarks">
        <div v-for="b in bookmarks" :key="b.text" class="bm" :class="{ clip: b.clip }" :style="{ width: b.slot + 'px' }">
          <svg width="32" height="32" viewBox="0 0 32 32" v-html="bookmarkIcons[b.icon]"></svg>
          <span v-fit="b.w">{{ b.text }}</span>
        </div>
        <svg class="more" viewBox="0 0 28 26"><path d="M2 2l10 11L2 24M15 2l10 11-10 11" fill="none" stroke="#fbfbfe" stroke-width="2.400" stroke-linecap="round" /></svg>
        <div class="bm other">
          <svg width="32" height="32" viewBox="0 0 32 32" v-html="bookmarkIcons.folder"></svg>
          <span v-fit="180">Other Bookmarks</span>
        </div>
      </div>

      <div class="banner">
        <span v-fit="1029">This is a temporary development preview, and these links are not for public use.</span>
        <a v-fit="216">Deploy your app</a>
        <span v-fit="498">for secure sharing or use an invite link.</span>
        <svg viewBox="0 0 20 20"><path d="M1 1l18 18M19 1L1 19" stroke="#d5deec" stroke-width="2" /></svg>
      </div>

      <div class="page">
        <nav class="sidebar">
          <div v-for="r in navRows" :key="r.label" class="row" :class="{ head: !r.icon }">
            <svg v-if="r.icon" class="lucide" viewBox="0 0 24 24" v-html="lineIcons[r.icon]"></svg>
            <i v-else class="rule"></i>
            <span>{{ r.label }}</span>
          </div>
        </nav>
        <main class="main">
          <div class="subtabs">
            <div class="subtab"><svg class="lucide" viewBox="0 0 24 24" v-html="lineIcons.users"></svg><span v-fit="259">User Management</span></div>
            <div class="subtab on"><svg class="lucide" viewBox="0 0 24 24" v-html="lineIcons.megaphone"></svg><span v-fit="231">Announcements</span></div>
          </div>
          <div class="head-row">
            <div>
              <h2>Announcements</h2>
              <p>Manage website banners</p>
            </div>
            <button class="new-btn"><svg class="lucide" viewBox="0 0 24 24" v-html="lineIcons.plus"></svg><span v-fit="284">New Announcement</span></button>
          </div>
          <div class="card"></div>
        </main>
      </div>

      <div class="findbar">
        <svg class="find-x" viewBox="0 0 24 24"><path d="M1 1l22 22M23 1L1 23" stroke="#fbfbfe" stroke-width="2.400" /></svg>
        <div class="find-input">it</div>
        <svg class="find-chev" viewBox="0 0 26 14"><path d="M2 13L13 2l11 11" fill="none" stroke="#fbfbfe" stroke-width="2.400" /></svg>
        <svg class="find-chev down" viewBox="0 0 26 14"><path d="M2 1l11 11L24 1" fill="none" stroke="#fbfbfe" stroke-width="2.400" /></svg>
        <template v-for="f in findOptions" :key="f.text">
          <i class="check"></i>
          <span class="find-label" :style="{ width: f.w + f.gap + 'px' }"><b v-fit="f.w">{{ f.text }}</b></span>
        </template>
        <span class="find-label"><b v-fit="125">1 of 1 match</b></span>
      </div>
    </section>

    <footer class="dock">
      <template v-for="a in dockApps" :key="a.name">
        <i v-if="a.sep" class="dock-sep"></i>
        <div v-else class="dock-item">
          <div class="tile" :style="{ background: a.bg }">
            <svg viewBox="0 0 72 72" v-html="a.art"></svg>
          </div>
          <i v-if="a.dot" class="dot"></i>
          <span v-if="a.badge" class="badge" :class="{ long: a.badge.length > 2 }">{{ a.badge }}</span>
        </div>
      </template>
      <div class="dock-item">
        <svg class="stack" viewBox="0 0 72 68">
          <path d="M14 0h43v22H14z" fill="#eceae8" /><path d="M18 4h8v4h-8zM23 14h22v5H23z" fill="#bdbab8" /><path d="M14 0h4v22h-4z" fill="#7d8288" />
          <path d="M4 20h64v46H4z" fill="#35607c" /><path d="M0 26h66v36H0z" fill="#f6f6f4" /><path d="M4 62h62v2H4z" fill="#2d5169" />
          <path d="M12 38h12v10H12z" fill="#e0bd8c" /><circle cx="50" cy="42" r="7" fill="#8fae8c" /><path d="M50 38l5 6-8 2z" fill="#c95a4a" /><path d="M33 45h6M36 42v6" stroke="#555" stroke-width="1.500" /><path d="M10 50h18M13 54h12M41 52h18" stroke="#444" stroke-width="2.400" />
          <path d="M54 26l18 20H56z" fill="#e2e2e0" /><path d="M42 1h15v16l-13-2z" fill="#f8f8f7" />
        </svg>
      </div>
      <div v-for="n in 2" :key="n" class="dock-item mini">
        <svg viewBox="0 0 72 72"><rect width="72" height="72" rx="14" fill="#fff" /><g v-html="chromeDisc('m' + n) + betaRibbon"></g></svg>
      </div>
      <div class="dock-item">
        <svg class="trash" viewBox="0 0 62 80">
          <path d="M1 14l7 58q1 7 10 7h26q9 0 10-7l7-58z" fill="#dfdfdd" /><ellipse cx="31" cy="14" rx="30" ry="8" fill="#b9b9b8" />
          <path d="M4 13l6-9 7 3 5-6 9 5 7-6 6 6 8-2 6 9-10 7H16z" fill="#eeeeec" />
          <path d="M10 12l5-4 3 6zM36 8l6 4-5 5zM22 16l5-3 2 5zM46 14l6-2-2 6z" fill="#4c5357" /><path d="M18 10l4 2-3 4z" fill="#3fa7a0" /><path d="M42 17l5 0-3 4z" fill="#b5663c" />
          <path d="M14 26l5 48M31 24v52M48 26l-5 48" stroke="#f4f4f3" stroke-width="5" opacity=".7" />
          <path d="M22 32l8 18-8 22M40 34l-6 20 8 16" fill="none" stroke="#c9c9c7" stroke-width="2.500" />
        </svg>
      </div>
    </footer>

    <div class="modal">
      <h3 v-fit="474">Create New Announcement</h3>
      <svg class="lucide modal-x" viewBox="0 0 24 24" v-html="lineIcons.x"></svg>
      <label>Title *</label>
      <div class="field">Create accounts</div>
      <label>Message *</label>
      <div class="field area">
        <span v-fit="1332">Create your account! Register using your email and password of choice! Let Katie know as soon</span>
        <span v-fit="1184">as you create your account so that we can make sure you have the right permissions!</span>
        <svg class="grip" viewBox="0 0 26 26"><path d="M1 25L25 1M8 25L25 8M15 25L25 15M21 25l4-4" stroke="#55504d" stroke-width="1.800" /></svg>
      </div>
      <div class="pair">
        <div>
          <label>Type</label>
          <div class="field">Alert<svg class="lucide chev" viewBox="0 0 24 24" v-html="lineIcons.chevron"></svg></div>
        </div>
        <div>
          <label>Priority</label>
          <div class="field">Urgent<svg class="lucide chev" viewBox="0 0 24 24" v-html="lineIcons.chevron"></svg></div>
        </div>
      </div>
      <div class="pair">
        <div v-for="d in [{ l: 'Start Date', v: '06 / 30 / 2025' }, { l: 'End Date', v: '07 / 03 / 2025' }]" :key="d.l">
          <label>{{ d.l }}</label>
          <div class="field date"><span v-fit="191">{{ d.v }}</span>
            <svg class="cal" viewBox="0 0 32 32"><path d="M5 3h3V0h4v3h8V0h4v3h3q5 0 5 5v19q0 5-5 5H5q-5 0-5-5V8q0-5 5-5zM3 12v15q0 2 2 2h22q2 0 2-2V12z" fill="#97928f" fill-rule="evenodd" /></svg>
          </div>
        </div>
      </div>
      <div class="pair">
        <div><label>Link (optional)</label><div class="field">https://...</div></div>
        <div><label>Link Text</label><div class="field">Learn More</div></div>
      </div>
      <div class="actions">
        <button class="cancel"><span v-fit="96">Cancel</span></button>
        <button class="create"><span v-fit="315">Create Announcement</span></button>
      </div>
    </div>

    <div class="toast">
      <strong>Error</strong>
      <p>Failed to create announcement. Please try again.</p>
    </div>

    <div class="notification">
      <div class="gpt"><svg viewBox="0 0 24 24"><path :d="knotPath" fill="#2b3036" /></svg></div>
      <div class="note-text">
        <strong v-fit="113">ChatGPT</strong>
        <span v-fit="257">Time for iron and B12</span>
      </div>
    </div>
  </div>
</template>

<style>
html,
body {
  margin: 0;
  background: #000;
}
</style>

<style scoped>
.screen {
  position: relative;
  width: 3456px;
  height: 2234px;
  overflow: hidden;
  display: flex;
  flex-direction: column;
  background: #000;
  font-family: Inter, 'Liberation Sans', sans-serif;
  color: #fbfbfe;
}
.screen * {
  box-sizing: border-box;
}
i {
  font-style: normal;
}
span,
strong,
a,
b {
  white-space: nowrap;
}
svg {
  display: block;
  flex: none;
  overflow: visible;
}
.lucide {
  width: 36px;
  height: 36px;
  fill: none;
  stroke: currentColor;
  stroke-width: 2;
  stroke-linecap: round;
  stroke-linejoin: round;
}

/* wallpaper and background windows */
.wallpaper {
  position: absolute;
  left: 0;
  right: 0;
  top: 2080px;
  bottom: 0;
  display: flex;
}
.forest {
  width: 943px;
  background:
    radial-gradient(circle at 1% 55%, #3c4a2a, transparent 5%),
    radial-gradient(circle at 5% 96%, #2d4a22, transparent 6%),
    radial-gradient(circle at 38% 100%, #2f4a25, transparent 12%),
    linear-gradient(90deg, #14201c, #10211c 40%, #0e0c08 60%, #3a2012 88%, #1a0f08);
}
.sheet-gray {
  width: 341px;
  background: #cfcfce;
}
.sheet-white {
  width: 2131px;
  background: linear-gradient(90deg, #e6e6e6 0 489px, #c8c8c8 489px 491px, #e4e4e4 491px);
}
.sticky-note {
  width: 41px;
  background: linear-gradient(#2c2b20 20%, #d8cf88 38%, #f0e795 60%);
  color: #16160c;
  font: 700 26px/34px 'Liberation Sans', sans-serif;
  letter-spacing: -1px;
  padding-top: 55px;
  display: flex;
  flex-direction: column;
  gap: 42px;
  overflow: hidden;
}

/* menu bar */
.menubar {
  position: relative;
  height: 74px;
  display: flex;
  align-items: center;
  padding: 0 0 2px 38px;
  background: linear-gradient(90deg, #35352d, #3e3a2d 30%, #4a4633 55%, #4b4b33 70%, #43452f 85%, #3c3c28);
  font-size: 26px;
  flex: none;
}
.apple {
  width: 33px;
  height: 31px;
  margin-right: 37px;
  margin-top: -4px;
}
.menubar strong {
  font-weight: 700;
  margin-right: 41px;
}
.menu {
  font-weight: 500;
  margin-right: 42px;
}
.status {
  margin-left: auto;
  display: flex;
  align-items: center;
  margin-right: 35px;
}
.status-icon {
  width: 36px;
  height: 36px;
}
.percent {
  width: 61px;
  margin-left: 36px;
  font-size: 23px;
  font-weight: 500;
}
.percent i,
.clock i {
  display: inline-block;
}
.battery {
  width: 52px;
  height: 26px;
  margin: 0 36px 0 5px;
}
.spot {
  width: 28px;
  height: 28px;
  margin-right: 39px;
}
.control {
  width: 28px;
  height: 28px;
  margin-right: 36px;
}
.siri {
  width: 29px;
  height: 29px;
  border-radius: 50%;
  margin-right: 32px;
  background:
    radial-gradient(circle at 55% 50%, #fff 0 10%, transparent 38%),
    conic-gradient(#3f8a86, #2b8ab4, #3f55b8, #3a4fb0, #c0385c, #a03a6e, #3a4a5e, #3f8a86);
  border: 1px solid #6b8a8c;
}
.clock {
  display: flex;
  gap: 17px;
  font-weight: 500;
}

/* browser window */
.window {
  position: relative;
  margin-top: 2px;
  height: 2034px;
  flex: none;
  display: flex;
  flex-direction: column;
  border: 1px solid #5b5b62;
  border-top: 2px solid #6b6a73;
  border-bottom-width: 2px;
  border-radius: 20px;
  overflow: hidden;
  background: #2b2a33;
  box-shadow: 0 4px 14px #000;
}
.tabbar {
  height: 86px;
  flex: none;
  background: #1c1b22;
  display: flex;
  align-items: center;
}
.lights {
  display: flex;
  gap: 16px;
  padding-left: 25px;
}
.lights i {
  width: 24px;
  height: 24px;
  border-radius: 50%;
}
.red { background: #ed6a5e; }
.amber { background: #f5bf4f; }
.green { background: #62c554; }
.viewbtn {
  margin-left: 105px;
  width: 63px;
  height: 86px;
  border-right: 1px solid #4a4952;
  display: flex;
  align-items: center;
  margin-right: 4px;
}
.tab {
  width: 316px;
  height: 72px;
  margin: 0 4px;
  display: flex;
  align-items: center;
  border-radius: 8px;
  padding-left: 16px;
  font-size: 22.5px;
  letter-spacing: -0.1px;
  color: #b4b4ba;
  flex: none;
}
.tab-icon,
.ck {
  width: 32px;
  height: 32px;
  margin-right: 12px;
}
.tab-icon {
  margin-left: -2px;
}
.ck {
  margin-left: -2px;
  background: #3b8722;
  color: #fff;
  font-size: 25px;
  line-height: 31px;
  letter-spacing: -1.2px;
  text-align: center;
  border-radius: 2px;
}
.tab-label {
  flex: 1;
  overflow: hidden;
  min-width: 0;
  mask-image: linear-gradient(90deg, #000 calc(100% - 38px), transparent);
}
.tab-label i {
  display: inline-block;
}
.tab-x {
  width: 18px;
  height: 18px;
  margin-right: 23px;
}
.tab.active {
  background: #52515c;
  color: #fbfbfe;
  box-shadow: 0 0 6px #0008;
}
.tab.active .tab-label {
  mask-image: none;
}
.blue-favicon {
  width: 28px;
  height: 32px;
  margin-left: 16px;
  border-radius: 6px;
  background: #3c68d8;
}
.navbar {
  height: 72px;
  flex: none;
  display: flex;
  align-items: center;
  padding: 8px 0 0 30px;
}
.nav-ic {
  width: 32px;
  height: 32px;
  margin-right: 40px;
}
.dim {
  opacity: 0.4;
}
.urlbar {
  margin-left: 214px;
  width: 2387px;
  height: 64px;
  border-radius: 8px;
  background: #1c1b22;
  display: flex;
  align-items: center;
  padding-left: 17px;
  font-size: 28.5px;
}
.urlbar svg {
  margin-right: 25px;
}
.urlbar svg:nth-child(3) {
  margin-right: 22px;
}
.burger {
  width: 32px;
  height: 32px;
  margin-left: 541px;
  margin-top: 6px;
}
.bookmarks {
  height: 65px;
  flex: none;
  display: flex;
  align-items: center;
  padding: 9px 0 0 23px;
  font-size: 23px;
}
.bm {
  display: flex;
  align-items: center;
  gap: 9px;
  flex: none;
}
.clip {
  overflow: hidden;
}
.more {
  width: 28px;
  height: 26px;
  margin-left: 12px;
}
.other {
  margin-left: 27px;
}
.banner {
  height: 90px;
  flex: none;
  background: #183f7c;
  border-top: 1px solid #1b3a6c;
  border-bottom: 2px solid #234f8f;
  display: flex;
  align-items: center;
  gap: 8.500px;
  padding: 1px 49px 0 31px;
  font-size: 28px;
  color: #f3f6fb;
}
.banner a {
  font-weight: 500;
  text-decoration: underline;
  text-underline-offset: 5px;
  text-decoration-thickness: 2px;
}
.banner svg {
  width: 20px;
  height: 20px;
  margin-left: auto;
}

/* page under the dimming overlay */
.page {
  height: 1639px;
  flex: none;
  display: flex;
  overflow: hidden;
  background: #303230;
  font-family: Roboto, 'Liberation Sans', sans-serif;
}
.sidebar {
  width: 575px;
  height: 1639px;
  background: linear-gradient(#2c2c2c, #333 18px);
  border-right: 2px solid #2e302f;
  padding-top: 32px;
  flex: none;
  color: #0d0f13;
}
.row {
  height: 99px;
  display: flex;
  align-items: center;
  padding: 0 35px 0 62px;
  font-size: 31.5px;
  font-weight: 500;
  gap: 45px;
}
.head {
  padding: 18px 34px 0 35px;
  gap: 28px;
  font-size: 27px;
  letter-spacing: 1.350px;
  color: #161a20;
}
.rule {
  flex: 1;
  height: 2px;
  background: #2e2f30;
}
.main {
  flex: 1;
  padding: 0 53px 0 54px;
  margin-top: -38px;
}
.subtabs {
  display: flex;
  height: 87px;
  gap: 73px;
  border-bottom: 2px solid #2d2f2e;
  font-size: 31.5px;
  font-weight: 500;
  color: #14171c;
}
.subtab {
  display: flex;
  align-items: center;
  gap: 18px;
  height: 87px;
  padding: 0 9px;
}
.on {
  color: #0c1430;
  border-bottom: 3px solid #0d1836;
}
.head-row {
  display: flex;
  justify-content: space-between;
  align-items: center;
  margin-top: 55px;
  height: 137px;
}
h2 {
  margin: 0;
  font-size: 54px;
  line-height: 72px;
  letter-spacing: -0.6px;
  font-weight: 700;
  color: #030507;
}
p {
  margin: 0;
}
.head-row p {
  font-size: 36px;
  line-height: 54px;
  margin-top: 9px;
  color: #131619;
}
.new-btn {
  margin-top: -1px;
  width: 429px;
  height: 90px;
  border: 0;
  border-radius: 13px;
  background: #0c1a25;
  color: #2f3133;
  font: 500 31.5px Roboto, sans-serif;
  display: flex;
  align-items: center;
  padding: 0 36px;
  gap: 36px;
}
.card {
  margin-top: 55px;
  height: 430px;
  background: #333;
  border: 2px solid #2e302f;
  border-radius: 18px;
}

/* find bar */
.findbar {
  flex: 1;
  display: flex;
  align-items: center;
  background: linear-gradient(#2b2a33, #26252d);
  padding-left: 27px;
  padding-top: 3px;
  font-size: 22.500px;
}
.find-x {
  width: 24px;
  height: 24px;
}
.find-input {
  width: 396px;
  height: 48px;
  margin-left: 28px;
  margin-right: 33px;
  border: 2px solid #8f8f9d;
  border-radius: 8px;
  background: #42414d;
  padding-left: 16px;
  line-height: 44px;
}
.find-chev {
  width: 26px;
  height: 14px;
  margin-right: 34px;
}
.find-chev.down {
  margin-right: 48px;
}
.check {
  width: 32px;
  height: 32px;
  margin-right: 12px;
  border: 2px solid #8f8f9d;
  border-radius: 4px;
  background: #1c1b1d;
  flex: none;
}
.find-label b {
  display: inline-block;
  font-weight: 400;
}

/* dock */
.dock {
  position: relative;
  margin: 6px 0 0 73px;
  width: 3310px;
  height: 108px;
  flex: none;
  display: flex;
  padding: 15px 4px 0;
  border-radius: 32px;
  border: 1px solid #ffffff55;
  background: linear-gradient(90deg, #5d6963, #5f6662 7%, #60615d 13%, #5d5b59 20%, #6a6562 24%, #97928f 27.5%, #b4b2af 32%, #b9bcbc 36%, #c0bfbd 45%, #c0c0be);
}
.dock-item {
  position: relative;
  width: 89.5px;
  flex: none;
  display: flex;
  flex-direction: column;
  align-items: center;
}
.tile {
  width: 70px;
  height: 70px;
  border-radius: 16px;
  overflow: hidden;
  box-shadow: 0 1px 3px #0006;
}
.tile svg {
  width: 70px;
  height: 70px;
}
.dot {
  width: 8px;
  height: 8px;
  border-radius: 50%;
  margin-top: 10px;
  background: #333;
}
.badge {
  position: absolute;
  top: -9px;
  left: 55px;
  width: 34px;
  height: 34px;
  border-radius: 17px;
  background: #e4503f;
  color: #fff;
  font-size: 21px;
  line-height: 34px;
  text-align: center;
  letter-spacing: -0.8px;
}
.badge.long {
  left: 37px;
  width: 51px;
  font-size: 18px;
  letter-spacing: -0.6px;
}
.dock-sep {
  width: 1px;
  height: 80px;
  margin: -2px 19px 0;
  background: #8c8c8a;
  flex: none;
}
.stack {
  width: 72px;
  height: 68px;
  margin-top: -7px;
}
.mini svg {
  width: 26px;
  height: 26px;
  margin: 47px 0 0 54px;
}
.trash {
  width: 62px;
  height: 80px;
  margin-top: -6px;
}

/* dialog */
.modal {
  position: absolute;
  left: 972px;
  top: 506px;
  width: 1512px;
  height: 1318px;
  border: 2px solid #e8e8e8;
  border-radius: 18px;
  background: #fff;
  padding: 54px;
  display: flex;
  flex-direction: column;
  color: #66605d;
  font: 400 31.5px/45px Roboto, 'Liberation Sans', sans-serif;
  box-shadow: 0 20px 40px #0005;
}
h3 {
  margin: 0 0 36px;
  align-self: flex-start;
  white-space: nowrap;
  font-size: 40.5px;
  line-height: 41px;
  font-weight: 600;
}
.modal-x {
  position: absolute;
  top: 36px;
  right: 36px;
  color: #8f8b89;
  stroke-width: 1.700;
}
label {
  display: block;
  height: 58px;
  line-height: 62px;
  font-weight: 500;
}
.field {
  height: 90px;
  border: 2px solid #f5f4f4;
  border-radius: 13px;
  padding: 0 27px;
  display: flex;
  align-items: center;
  margin-bottom: 36px;
}
.area {
  position: relative;
  height: 176px;
  flex-direction: column;
  align-items: flex-start;
  padding-top: 19px;
}
.grip {
  position: absolute;
  right: 2px;
  bottom: 2px;
  width: 26px;
  height: 26px;
}
.pair {
  display: grid;
  grid-template-columns: 1fr 1fr;
  gap: 36px;
}
.chev {
  margin-left: auto;
  color: #b3b0ae;
}
.date {
  padding-left: 33px;
}
.cal {
  width: 32px;
  height: 32px;
  margin-left: auto;
  margin-right: 9px;
  margin-top: -3px;
}
.actions {
  margin-top: 36px;
  display: flex;
  justify-content: flex-end;
  gap: 18px;
}
.actions button {
  height: 90px;
  border-radius: 13px;
  font: 500 31.5px Roboto, sans-serif;
}
.cancel {
  width: 172px;
  border: 2px solid #f5f4f4;
  background: #fff;
  color: #66605d;
}
.create {
  width: 387px;
  border: 0;
  background: #3a86bb;
  color: #fff;
}

/* toast */
.toast {
  position: absolute;
  left: 2652px;
  top: 1736px;
  width: 768px;
  height: 256px;
  border-radius: 13px;
  background: #dc514b;
  padding: 57px 74px 0 56px;
  color: #fff;
  font: 400 31.5px/45px Roboto, 'Liberation Sans', sans-serif;
  box-shadow: 0 14px 30px #0004;
}
.toast strong {
  display: block;
  font-weight: 600;
  margin-bottom: 9px;
}
.toast p {
  opacity: 0.9;
}

/* notification */
.notification {
  position: absolute;
  left: 2736px;
  top: 106px;
  width: 688px;
  height: 114px;
  border-radius: 32px;
  background: #9b9aa0;
  border: 1px solid #b0afb4;
  box-shadow: 0 4px 24px #0007;
  display: flex;
  align-items: center;
  padding-left: 26px;
  color: #1d1d20;
  font-size: 26px;
}
.gpt {
  width: 62px;
  height: 63px;
  border-radius: 14px;
  background: linear-gradient(#fcfdfe, #dfe7f1);
  display: flex;
  align-items: center;
  justify-content: center;
  margin-right: 27px;
}
.gpt svg {
  width: 47px;
  height: 47px;
}
.note-text {
  display: flex;
  flex-direction: column;
  align-items: flex-start;
  line-height: 32px;
}
.note-text strong {
  font-weight: 600;
}
</style>
